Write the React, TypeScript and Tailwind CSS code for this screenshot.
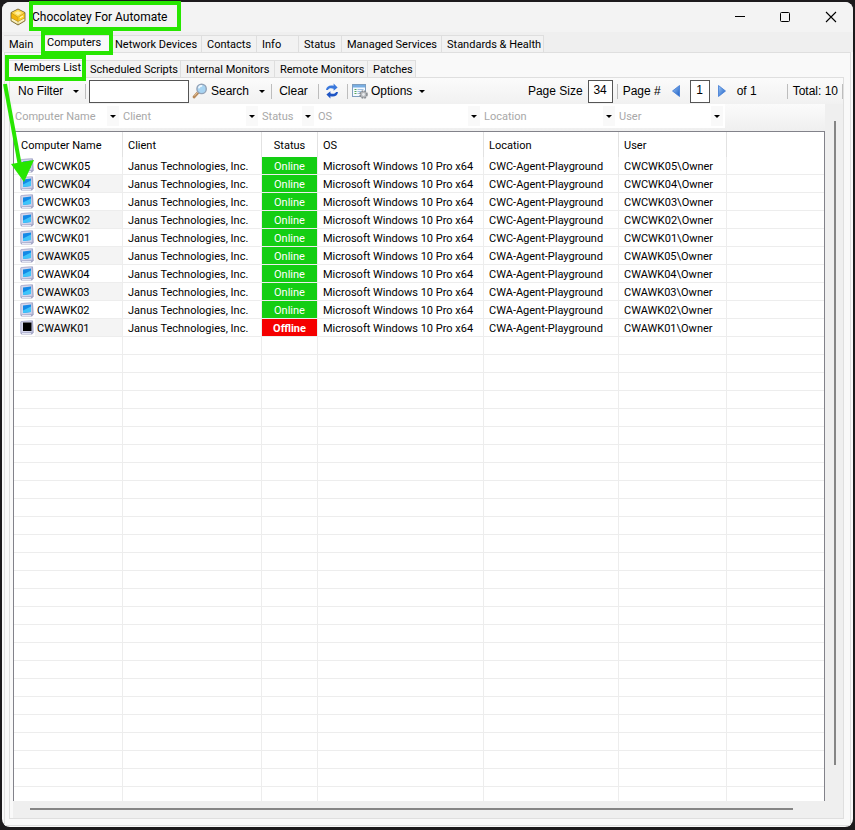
import React from 'react';

type Machine = { name: string; site: string; online: boolean };

const machines: Machine[] = [
  { name: 'CWCWK05', site: 'CWC', online: true },
  { name: 'CWCWK04', site: 'CWC', online: true },
  { name: 'CWCWK03', site: 'CWC', online: true },
  { name: 'CWCWK02', site: 'CWC', online: true },
  { name: 'CWCWK01', site: 'CWC', online: true },
  { name: 'CWAWK05', site: 'CWA', online: true },
  { name: 'CWAWK04', site: 'CWA', online: true },
  { name: 'CWAWK03', site: 'CWA', online: true },
  { name: 'CWAWK02', site: 'CWA', online: true },
  { name: 'CWAWK01', site: 'CWA', online: false },
];

const columns = [
  { label: 'Computer Name', width: 'w-[108px]', colWidth: 'w-[109px]' },
  { label: 'Client', width: 'w-[139px]', colWidth: 'w-[139px]' },
  { label: 'Status', width: 'w-[56px]', colWidth: 'w-[56px]' },
  { label: 'OS', width: 'w-[166px]', colWidth: 'w-[166px]' },
  { label: 'Location', width: 'w-[135px]', colWidth: 'w-[135px]' },
  { label: 'User', width: 'w-[108px]', colWidth: 'w-[108px]' },
];

const mainTabs = [
  { label: 'Main', width: 'w-[38px]' },
  { label: 'Computers', width: 'w-[68px]', active: true },
  { label: 'Network Devices', width: 'w-[92px]' },
  { label: 'Contacts', width: 'w-[55px]' },
  { label: 'Info', width: 'w-[42px]' },
  { label: 'Status', width: 'w-[43px]' },
  { label: 'Managed Services', width: 'w-[100px]' },
  { label: 'Standards & Health', width: 'w-[102px]' },
];

const subTabs = [
  { label: 'Members List', width: 'w-[76px]', active: true },
  { label: 'Scheduled Scripts', width: 'w-[96px]' },
  { label: 'Internal Monitors', width: 'w-[94px]' },
  { label: 'Remote Monitors', width: 'w-[93px]' },
  { label: 'Patches', width: 'w-[48px]' },
];

const Caret = () => (
  <svg width="6" height="3" viewBox="0 0 6 3" className="shrink-0" aria-hidden="true">
    <path d="M0 0h6L3 3z" fill="#000" />
  </svg>
);

const Separator = () => <span className="h-[15px] w-px shrink-0 bg-[#bdbdbd]" />;

const Logo = () => (
  <svg width="18" height="18" viewBox="0 0 18 18" aria-hidden="true">
    <path d="M9 1l7 3.6v8.2L9 17l-7-4.200V4.600z" fill="#a88a20" stroke="#6b5c2c" strokeWidth=".8" strokeLinejoin="round" />
    <path d="M9 1.500l6.500 3.300L9 9 2.500 4.800z" fill="#ffd84a" />
    <path d="M2.500 5.300L8.800 9.300v4l-6.300-3.500z" fill="#f2b50c" />
    <path d="M15.500 5.300L9.200 9.300v4l6.300-3.500z" fill="#ffcf25" />
    <path d="M2.500 10.300l6.300 3.500v2.500l-6.300-3.700zM15.500 10.300l-6.300 3.500v2.500l6.300-3.700z" fill="#f8efc0" />
    <path d="M5.500 5l3.500-1.800L12.500 5 9 7.200z" fill="#fff0a0" />
    <path d="M11 9.800l3-1.700" stroke="#fff4b8" strokeWidth="1.200" />
  </svg>
);

const Magnifier = () => (
  <svg width="16" height="16" viewBox="0 0 16 16" aria-hidden="true">
    <path d="M6.300 9.200L2 14" stroke="#b98b5c" strokeWidth="2.800" strokeLinecap="round" />
    <path d="M6 8.900L2.500 12.800" stroke="#e3c39b" strokeWidth="1" />
    <circle cx="9.600" cy="5.900" r="4.700" fill="#a8d4f2" stroke="#93a3b8" strokeWidth="1.400" />
    <path d="M6.800 5.400a3 3 0 0 1 3.400-2.500" stroke="#eef8ff" strokeWidth="1.600" fill="none" />
  </svg>
);

const Refresh = () => (
  <svg width="14" height="16" viewBox="0 0 14 16" aria-hidden="true">
    <path d="M1 7C1.400 3.200 5 1.600 8.600 2.800V.4L12.600 4.400 8.600 7.800V5.700C6 4.700 3.500 5.200 3 7z" fill="#3a78dc" />
    <path d="M13 9c-.4 3.800-4 5.400-7.600 4.200v2.400L1.400 11.600 5.400 8.200v2.100c2.600 1 5.100.5 5.600-1.300z" fill="#1f55c4" />
  </svg>
);

const OptionsIcon = () => (
  <svg width="16" height="16" viewBox="0 0 16 16" aria-hidden="true">
    <rect x=".5" y="1.500" width="13" height="12" fill="#f5faff" stroke="#7f9dbd" />
    <rect x="1" y="2" width="12" height="2.500" fill="#78aee3" />
    <path d="M2.500 6.500h2M2.500 8.500h2M2.500 10.500h2" stroke="#58a85a" />
    <path d="M5.500 6.500h6M5.500 8.500h5M5.500 10.500h3" stroke="#9fbfe0" />
    <circle cx="11.500" cy="11.500" r="3.500" fill="#b4b7bb" stroke="#8a8e93" strokeDasharray="1.800 1" strokeWidth="1.600" />
    <circle cx="11.500" cy="11.500" r="1.400" fill="#e9ebee" />
  </svg>
);

const PageArrow = ({ next = false }: { next?: boolean }) => (
  <svg width="8" height="12" viewBox="0 0 8 12" aria-hidden="true">
    <defs>
      <linearGradient id={next ? 'nextFill' : 'prevFill'} x1="0" x2="1" y1="0" y2="1">
        <stop offset="0" stopColor="#9cc6f5" />
        <stop offset="1" stopColor="#1c5fc6" />
      </linearGradient>
    </defs>
    <path
      d={next ? 'M.5.500L7.500 6 .5 11.500z' : 'M7.500.500L.5 6l7 5.500z'}
      fill={next ? 'url(#nextFill)' : 'url(#prevFill)'}
      stroke="#3d79d3"
      strokeWidth=".8"
    />
  </svg>
);

const Monitor = ({ online }: { online: boolean }) => (
  <svg width="14" height="15" viewBox="0 0 14 15" className="shrink-0" aria-hidden="true">
    <path d="M3 1L13 .5l.7 12-1.700 2H1.500L.5 13.500V2z" fill="#a3a5c4" />
    <path d="M1 1.500L11.800.900l.5 11.200L1 12.800z" fill="#d5d7ec" stroke="#b0b2d2" strokeWidth=".8" />
    <path d="M2 13.600h9" stroke="#eceefa" />
    {online ? (
      <>
        <path d="M3 3.500l8-1v7.500l-8 1z" fill="#1489e6" />
        <path d="M3 8.500l8-4V10l-8 1z" fill="#3fc4fa" />
      </>
    ) : (
      <path d="M3 2.500h8.500v8.500H3z" fill="#000" />
    )}
  </svg>
);

type Tab = { label: string; width: string; active?: boolean };

const TabStrip = ({ tabs, label }: { tabs: Tab[]; label: string }) => (
  <div role="tablist" aria-label={label} className="flex h-[17px] items-end font-['Roboto',sans-serif] text-[11px]">
    {tabs.map((t) => (
      <button
        key={t.label}
        role="tab"
        aria-selected={!!t.active}
        className={`h-[17px] shrink-0 border-t border-r border-[#dedede] text-left leading-[14px] whitespace-nowrap ${t.width} ${
          t.active ? 'bg-[#f9f9f9] pb-[2px] pl-[5px]' : 'bg-[#f2f2f2] pt-[2px] pl-[5px]'
        }`}
      >
        {t.label}
      </button>
    ))}
  </div>
);

const Toolbar = () => (
  <div className="flex h-[26px] items-center bg-linear-to-b from-[#fbfbfb] to-[#f1f1f1] pl-[8px] text-[12px] whitespace-nowrap">
    <button className="flex w-[67px] shrink-0 items-center gap-[10px]">
      No Filter <Caret />
    </button>
    <Separator />
    <input aria-label="Search text" className="mx-[3px] h-[23px] w-[100px] shrink-0 border border-[#555] bg-white px-1 outline-none" />
    <button className="flex w-[79px] shrink-0 items-center">
      <Magnifier />
      <span className="mr-[10px] ml-[3px]">Search</span>
      <Caret />
    </button>
    <Separator />
    <button className="w-[46px] shrink-0 pr-[3px]">Clear</button>
    <Separator />
    <button aria-label="Refresh" className="flex w-[28px] shrink-0 pl-[6px]">
      <Refresh />
    </button>
    <Separator />
    <button className="ml-[4px] flex shrink-0 items-center">
      <OptionsIcon />
      <span className="mr-[7px] ml-[3px]">Options</span>
      <Caret />
    </button>
    <div className="ml-auto flex items-center">
      <label htmlFor="page-size" className="mr-[5px]">
        Page Size
      </label>
      <input
        id="page-size"
        defaultValue="34"
        className="mr-[4px] h-[23px] w-[25px] border border-[#555] bg-white pb-[2px] text-center outline-none"
      />
      <Separator />
      <label htmlFor="page-number" className="ml-[5px] w-[49px]">
        Page #
      </label>
      <button aria-label="Previous page">
        <PageArrow />
      </button>
      <input
        id="page-number"
        defaultValue="1"
        className="mr-[8px] ml-[10px] h-[23px] w-[20px] border border-[#555] bg-white pb-[2px] text-center outline-none"
      />
      <button aria-label="Next page">
        <PageArrow next />
      </button>
      <span className="ml-[11px] w-[50px]">of 1</span>
      <Separator />
      <span className="mr-[4px] ml-[5px]">Total: 10</span>
      <Separator />
    </div>
  </div>
);

const FilterBar = () => (
  <div className="flex h-[27px] bg-linear-to-b from-[#fbfbfb] to-[#efefef]">
    {columns.map((c) => (
      <div key={c.label} className={`flex h-[24px] shrink-0 items-center bg-white ${c.width}`}>
        <input
          aria-label={`Filter by ${c.label}`}
          placeholder={c.label}
          className="h-full min-w-0 flex-1 bg-transparent pl-[2px] outline-none placeholder:text-[#a8a8a8]"
        />
        <button aria-label={`${c.label} filter menu`} className="mr-[2px] flex h-[20px] w-[12px] items-center justify-center bg-[#f9f9f9]">
          <Caret />
        </button>
      </div>
    ))}
  </div>
);

const blankRows = Array.from({ length: 26 }, (_, i) => i);
const cell = 'h-[18px] border-r border-b border-[#ededed] p-0 pt-[2px] pl-[5px]';

const MemberTable = () => (
  <table className="w-full table-fixed border-separate border-spacing-0 text-left leading-[15px] whitespace-nowrap">
    <colgroup>
      {columns.map((c) => (
        <col key={c.label} className={c.colWidth} />
      ))}
      <col />
    </colgroup>
    <thead>
      <tr>
        {columns.map((c) => (
          <th
            key={c.label}
            scope="col"
            className={`h-[25px] border-r border-[#e2e2e2] p-0 pt-[2px] font-normal ${
              c.label === 'Status' ? 'text-center' : c.label === 'Computer Name' ? 'pl-[7px]' : 'pl-[5px]'
            }`}
          >
            {c.label}
          </th>
        ))}
        <td />
      </tr>
    </thead>
    <tbody>
      {machines.map((m, i) => (
        <tr key={m.name}>
          <td className="h-[18px] border-r border-b border-[#ededed] p-0 pl-[6px]">
            <div className="flex h-[17px] items-center">
              <Monitor online={m.online} />
              <span className={`ml-px h-[17px] flex-1 pt-[2px] pl-[2px] ${i % 2 ? 'bg-[#f4f4f4]' : ''}`}>{m.name}</span>
            </div>
          </td>
          <td className={cell}>Janus Technologies, Inc.</td>
          <td
            className={`h-[18px] border-r border-b border-[#ededed] p-0 pt-[2px] text-center text-white ${
              m.online ? 'bg-[#13ce13] bg-clip-padding' : 'bg-[#f50000] bg-clip-padding font-bold'
            }`}
          >
            {m.online ? 'Online' : 'Offline'}
          </td>
          <td className={cell}>Microsoft Windows 10 Pro x64</td>
          <td className={cell}>{m.site}-Agent-Playground</td>
          <td className={cell}>{m.name}\Owner</td>
          <td className="border-b border-[#ededed]" />
        </tr>
      ))}
      {blankRows.map((r) => (
        <tr key={r} aria-hidden="true">
          {columns.map((c) => (
            <td key={c.label} className={cell} />
          ))}
          <td className="border-b border-[#ededed]" />
        </tr>
      ))}
    </tbody>
  </table>
);

const Annotations = () => (
  <div className="pointer-events-none absolute inset-0" aria-hidden="true">
    <div className="absolute top-px left-[29px] h-[30px] w-[152px] border-4 border-[#27e600]" />
    <div className="absolute top-[31px] left-[41px] h-[24px] w-[72px] border-4 border-[#27e600]" />
    <div className="absolute top-[55px] left-[5px] h-[26px] w-[81px] border-4 border-[#27e600]" />
    <svg className="absolute top-[80px] left-0" width="40" height="105" viewBox="0 0 40 105">
      <path d="M5 4L20 86" stroke="#27e600" strokeWidth="4" />
      <path d="M11 84l23-4-10 22z" fill="#27e600" />
    </svg>
  </div>
);

export default function App() {
  return (
    <div className="relative flex h-screen flex-col bg-[#1c1a1c] px-[2px] pt-[2px] pb-[3px] font-['Liberation_Sans',Arial,sans-serif] text-[11px] text-black">
      <div className="flex min-h-0 flex-1 flex-col overflow-hidden rounded-lg bg-[#f9f9f9]">
        <header className="flex h-[30px] shrink-0 items-center bg-[#f3f3f3] pl-[7px]">
          <Logo />
          <h1 className="ml-[5px] font-['Roboto',sans-serif] text-[12px]">Chocolatey For Automate</h1>
          <div className="ml-auto flex h-full items-center pr-[16px]">
            <button aria-label="Minimize" className="mr-[35px]">
              <svg width="10" height="10" viewBox="0 0 10 10">
                <path d="M0 4.500h10" stroke="#000" />
              </svg>
            </button>
            <button aria-label="Maximize" className="mr-[35px]">
              <svg width="10" height="10" viewBox="0 0 10 10">
                <rect x=".5" y=".5" width="9" height="9" rx="1" fill="none" stroke="#000" />
              </svg>
            </button>
            <button aria-label="Close">
              <svg width="12" height="12" viewBox="0 0 12 12">
                <path d="M1 1l10 10M11 1L1 11" stroke="#000" strokeWidth="1.100" />
              </svg>
            </button>
          </div>
        </header>
        <div className="shrink-0 bg-[#efefef] pt-[3px] pl-[2px]">
          <TabStrip tabs={mainTabs} label="Sections" />
        </div>
        <main className="mx-[2px] mb-px flex min-h-0 flex-1 flex-col border border-[#dfdfdf] bg-[#f9f9f9] pt-[7px] pr-[6px] pb-[6px] pl-[4px]">
          <TabStrip tabs={subTabs} label="Computer views" />
          <section className="flex min-h-0 flex-1 flex-col border border-[#dfdfdf]">
            <Toolbar />
            <div className="flex min-h-0 flex-1 pl-[3px]">
              <div className="flex min-w-0 flex-1 flex-col font-['Roboto',sans-serif]">
                <FilterBar />
                <div className="min-h-0 flex-1 overflow-hidden border-t border-r border-l border-[#82828a] bg-white">
                  <MemberTable />
                </div>
                <div className="h-[17px] shrink-0 bg-[#efefef] pt-[7px] pr-[32px] pl-[17px]">
                  <div className="h-[2px] bg-[#858585]" />
                </div>
              </div>
              <div className="w-[18px] shrink-0 bg-[#efefef] pt-[17px] pb-[53px] pl-[9px]">
                <div className="h-full w-[2px] bg-[#858585]" />
              </div>
            </div>
          </section>
        </main>
      </div>
      <Annotations />
    </div>
  );
}
